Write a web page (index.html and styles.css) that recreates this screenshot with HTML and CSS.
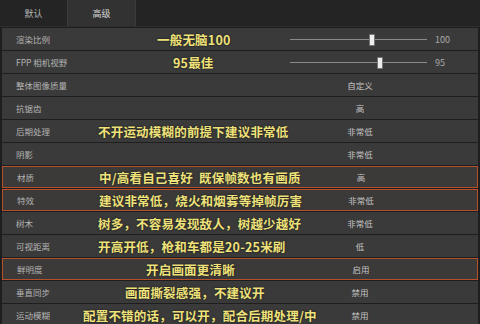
FILE: index.html
```html
<!DOCTYPE html>
<html lang="zh-CN">
  <head>
    <meta charset="UTF-8" />
    <meta name="viewport" content="width=device-width, initial-scale=1.0" />
    <title>画面设置</title>
    <link rel="stylesheet" href="styles.css">
  </head>
  <body>
    <div class="tabs">
      <div class="tab">默认</div>
      <div class="tab active">高级</div>
    </div>

    <div class="list">
      <div class="row">
        <span class="label">渲染比例</span>
        <span class="note note-r1">一般无脑100</span>
        <div class="slider"><div class="track"><div class="thumb thumb-100"></div></div></div>
        <span class="num">100</span>
      </div>
      <div class="row">
        <span class="label">FPP 相机视野</span>
        <span class="note note-r2">95最佳</span>
        <div class="slider"><div class="track"><div class="thumb thumb-95"></div></div></div>
        <span class="num">95</span>
      </div>
      <div class="row">
        <span class="label">整体图像质量</span>
        <span class="note"></span>
        <span class="value">自定义</span>
      </div>
      <div class="row">
        <span class="label">抗锯齿</span>
        <span class="note"></span>
        <span class="value">高</span>
      </div>
      <div class="row">
        <span class="label">后期处理</span>
        <span class="note">不开运动模糊的前提下建议非常低</span>
        <span class="value">非常低</span>
      </div>
      <div class="row">
        <span class="label">阴影</span>
        <span class="note"></span>
        <span class="value">非常低</span>
      </div>
      <div class="row marked">
        <span class="label">材质</span>
        <span class="note">中/高看自己喜好&nbsp;&nbsp;既保帧数也有画质</span>
        <span class="value">高</span>
      </div>
      <div class="row marked">
        <span class="label">特效</span>
        <span class="note">建议非常低，烧火和烟雾等掉帧厉害</span>
        <span class="value">非常低</span>
      </div>
      <div class="row">
        <span class="label">树木</span>
        <span class="note">树多，不容易发现敌人，树越少越好</span>
        <span class="value">非常低</span>
      </div>
      <div class="row">
        <span class="label">可视距离</span>
        <span class="note">开高开低，枪和车都是20-25米刷</span>
        <span class="value">低</span>
      </div>
      <div class="row marked">
        <span class="label">鲜明度</span>
        <span class="note note-r11">开启画面更清晰</span>
        <span class="value">启用</span>
      </div>
      <div class="row">
        <span class="label">垂直同步</span>
        <span class="note note-r12">画面撕裂感强，不建议开</span>
        <span class="value">禁用</span>
      </div>
      <div class="row">
        <span class="label">运动模糊</span>
        <span class="note note-r13">配置不错的话，可以开，配合后期处理/中</span>
        <span class="value">禁用</span>
      </div>
    </div>
  </body>
</html>
```

FILE: styles.css
```css
body {
  margin: 0;
  width: 480px;
  height: 324px;
  overflow: hidden;
  background-color: #1e1e1e;
  font-family: "Noto Sans CJK SC", "Noto Sans", sans-serif;
}
.tabs {
  display: flex;
  height: 26px;
  background-color: #242424;
  border-bottom: 1px solid #2e2e2e;
}
.tab {
  width: 67px;
  display: flex;
  justify-content: center;
  align-items: center;
  font-size: 9px;
  color: #b8b8b8;
}
.tab.active {
  background-color: #323232;
  border-left: 1px solid #3c3c3c;
  border-right: 1px solid #3c3c3c;
  color: #d8d8d8;
}
.list {
  display: flex;
  flex-direction: column;
  gap: 1px;
  padding: 1px 2px 0 2px;
}
.row {
  display: grid;
  grid-template-columns: 96px 192px 140px 1fr;
  align-items: center;
  height: 22px;
  flex-shrink: 0;
  background-color: #3a3a3a;
  box-sizing: border-box;
}
.row.marked {
  border: 1.5px solid #b4512c;
  background-color: #3c3a39;
}
.label {
  padding-left: 14px;
  font-size: 8.5px;
  color: #b4b4b4;
  white-space: nowrap;
}
.note {
  font-size: 12.5px;
  font-weight: bold;
  color: #efe27a;
  white-space: nowrap;
  text-shadow: 0 0 2px #111;
  letter-spacing: 0.2px;
}
.note-r1 {
  margin-left: 59px;
}
.note-r2 {
  margin-left: 75px;
}
.note-r11 {
  margin-left: 47px;
}
.note-r12 {
  margin-left: 27px;
}
.note-r13 {
  margin-left: -15px;
}
.value {
  text-align: center;
  font-size: 8.5px;
  color: #c4c4c4;
}
.slider {
  padding-right: 3px;
}
.track {
  position: relative;
  height: 1px;
  background-color: #8a8a8a;
}
.thumb {
  position: absolute;
  top: -5px;
  width: 4px;
  height: 10px;
  background-color: #eeeeee;
  border: 1px solid #777;
  border-radius: 1px;
}
.thumb-100 {
  left: 79px;
}
.thumb-95 {
  left: 87px;
}
.num {
  padding-left: 5px;
  font-size: 9px;
  color: #aaaaaa;
}
```
